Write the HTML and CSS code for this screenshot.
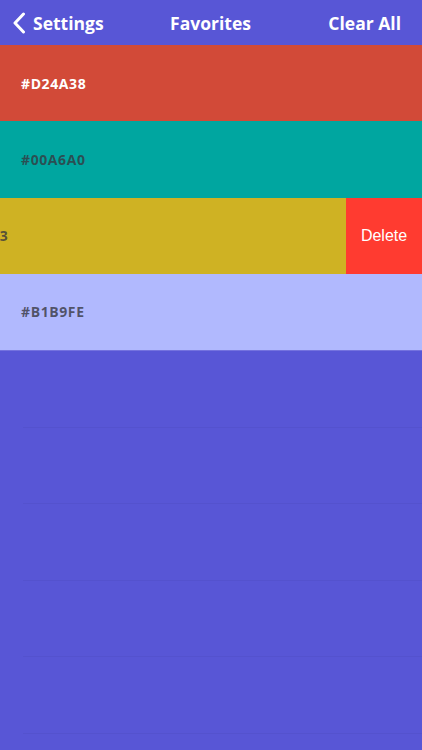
FILE: index.html
```html
<!DOCTYPE html>
<html>
<head>
<meta charset="utf-8">
<link rel="stylesheet" href="styles.css">
</head>
<body>
<div class="screen">
  <header class="nav">
    <div class="nav-left">
      <svg class="chev" width="14" height="22" viewBox="0 0 14 22"><path d="M11.5 2 L3 11 L11.5 20" fill="none" stroke="#fff" stroke-width="3" stroke-linecap="round" stroke-linejoin="round"/></svg>
      <span>Settings</span>
    </div>
    <div class="nav-title">Favorites</div>
    <div class="nav-right">Clear All</div>
  </header>
  <div class="list">
    <div class="row red"><span class="hex light">#D24A38</span></div>
    <div class="row teal"><span class="hex">#00A6A0</span></div>
    <div class="row swipe">
      <div class="swipe-content yellow"><span class="hex">#CFB223</span></div>
      <div class="delete">Delete</div>
    </div>
    <div class="row lavender"><span class="hex">#B1B9FE</span></div>
    <div class="divider"></div>
    <div class="empty"></div>
    <div class="empty"></div>
    <div class="empty"></div>
    <div class="empty"></div>
    <div class="empty"></div>
  </div>
</div>
</body>
</html>
```

FILE: styles.css
```css
* { box-sizing: border-box; }
html, body { margin: 0; padding: 0; }
body {
  background: #5856D6;
  width: 422px;
  height: 750px;
  overflow: hidden;
}
.screen {
  display: flex;
  flex-direction: column;
  height: 750px;
  background: #5856D6;
}
.nav {
  height: 45px;
  display: grid;
  grid-template-columns: 1fr auto 1fr;
  align-items: center;
  color: #fff;
  font-family: "Open Sans", sans-serif;
  font-weight: 700;
  font-size: 17.5px;
  padding: 0 21px 0 12px;
}
.nav-left {
  display: flex;
  align-items: center;
  gap: 7px;
}
.chev { display: block; }
.nav-title { text-align: center; padding-left: 8px; }
.nav-right { text-align: right; }
.list {
  display: flex;
  flex-direction: column;
}
.row {
  height: 76.25px;
  display: flex;
  align-items: center;
  padding-left: 21px;
}
.hex {
  font-family: "Open Sans", sans-serif;
  font-weight: 700;
  font-size: 14px;
  letter-spacing: 0.6px;
  color: rgba(55, 55, 62, 0.78);
}
.hex.light { color: #fff; }
.red { background: #D24A38; }
.teal { background: #00A6A0; }
.yellow { background: #CFB223; }
.lavender { background: #B1B9FE; }
.swipe {
  padding-left: 0;
  overflow: hidden;
  align-items: stretch;
}
.swipe-content {
  flex: 0 0 100%;
  margin-left: -76px;
  display: flex;
  align-items: center;
  padding-left: 21px;
}
.delete {
  flex: 0 0 76px;
  background: #FF3B30;
  color: #fff;
  display: flex;
  align-items: center;
  justify-content: center;
  font-family: "Liberation Sans", Arial, sans-serif;
  font-size: 16px;
}
.divider {
  height: 1px;
  background: #7472DE;
}
.empty {
  height: 76.5px;
  margin-left: 23px;
  border-bottom: 1px solid rgba(0, 0, 0, 0.035);
}
```
